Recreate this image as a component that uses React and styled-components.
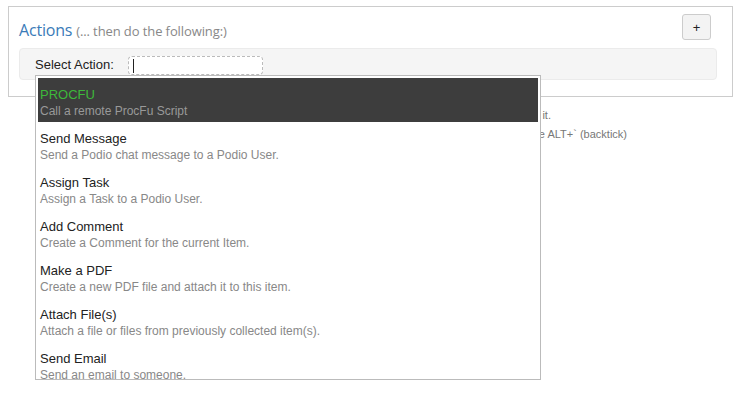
import React from 'react';
import styled, { createGlobalStyle } from 'styled-components';

const GlobalStyle = createGlobalStyle`
  body {
    margin: 0;
    background: #fff;
    font-family: "Liberation Sans", Arial, sans-serif;
  }
`;

const Page = styled.div`
  position: relative;
  padding: 6px 8px;
  width: 741px;
  height: 399px;
  box-sizing: border-box;
`;

const Panel = styled.div`
  border: 1px solid #ccc;
  padding: 7px 15px 16px 10px;
`;

const Header = styled.div`
  display: flex;
  justify-content: space-between;
  align-items: flex-start;
  height: 34px;
`;

const Title = styled.h3`
  margin: 5px 0 0;
  font-family: "Open Sans", sans-serif;
  font-weight: 400;
  font-size: 16px;
  color: #3a7bb8;
  letter-spacing: -0.2px;
`;

const Sub = styled.small`
  font-size: 13px;
  color: #888;
  letter-spacing: -0.1px;
`;

const AddButton = styled.button`
  width: 29px;
  height: 26px;
  margin-right: 6px;
  padding: 0;
  background: #f3f3f3;
  border: 1px solid #ccc;
  border-radius: 3px;
  font-family: "Liberation Sans", Arial, sans-serif;
  font-size: 13px;
  color: #222;
`;

const Well = styled.div`
  display: flex;
  align-items: center;
  gap: 14px;
  height: 32px;
  box-sizing: border-box;
  padding: 0 15px;
  background: #f5f5f5;
  border: 1px solid #ebebeb;
  border-radius: 4px;
`;

const Label = styled.span`
  font-size: 13px;
  color: #222;
`;

const Input = styled.div`
  width: 135px;
  height: 19px;
  box-sizing: border-box;
  border: 1px dashed #bbb;
  border-radius: 4px;
  background: #fff;
  padding: 2px 4px;
  margin-top: 2px;
`;

const Caret = styled.span`
  display: block;
  width: 0;
  height: 14px;
  border-left: 1px solid #222;
`;

const Hints = styled.div`
  margin-top: 9px;
  font-size: 11px;
  line-height: 19px;
  color: #777;
`;

const HintLine = styled.div`
  width: ${({ $end }) => $end}px;
  text-align: right;
  white-space: nowrap;
  overflow: hidden;
`;

const Menu = styled.ul`
  position: absolute;
  left: 35px;
  top: 75px;
  width: 506px;
  height: 305px;
  box-sizing: border-box;
  margin: 0;
  padding: 2px;
  list-style: none;
  background: #fff;
  border: 1px solid #bbb;
  overflow: hidden;
`;

const Item = styled.li`
  height: 44px;
  box-sizing: border-box;
  padding: 9px 2px 3px;
  background: ${({ $active }) => ($active ? '#3d3d3d' : 'transparent')};
`;

const ItemTitle = styled.div`
  font-size: 13px;
  line-height: 16px;
  color: ${({ $active }) => ($active ? '#3db83a' : '#222')};
`;

const ItemDesc = styled.div`
  font-size: 12px;
  line-height: 16px;
  color: ${({ $active }) => ($active ? '#999' : '#888')};
`;

const actions = [
  { title: 'PROCFU', desc: 'Call a remote ProcFu Script' },
  { title: 'Send Message', desc: 'Send a Podio chat message to a Podio User.' },
  { title: 'Assign Task', desc: 'Assign a Task to a Podio User.' },
  { title: 'Add Comment', desc: 'Create a Comment for the current Item.' },
  { title: 'Make a PDF', desc: 'Create a new PDF file and attach it to this item.' },
  { title: 'Attach File(s)', desc: 'Attach a file or files from previously collected item(s).' },
  { title: 'Send Email', desc: 'Send an email to someone.' },
];

const App = () => {
  return (
    <>
      <GlobalStyle />
      <Page>
        <Panel>
          <Header>
            <Title>
              Actions <Sub>(... then do the following:)</Sub>
            </Title>
            <AddButton>+</AddButton>
          </Header>
          <Well>
            <Label>Select Action:</Label>
            <Input>
              <Caret />
            </Input>
          </Well>
        </Panel>
        <Hints>
          <HintLine $end={543}>Start typing to filter the list of actions, then click an action to add it.</HintLine>
          <HintLine $end={619}>To insert a field token into any text box, use ALT+` (backtick)</HintLine>
        </Hints>
        <Menu>
          {actions.map((a, i) => (
            <Item key={a.title} $active={i === 0}>
              <ItemTitle $active={i === 0}>{a.title}</ItemTitle>
              <ItemDesc $active={i === 0}>{a.desc}</ItemDesc>
            </Item>
          ))}
        </Menu>
      </Page>
    </>
  );
};

export default App;
